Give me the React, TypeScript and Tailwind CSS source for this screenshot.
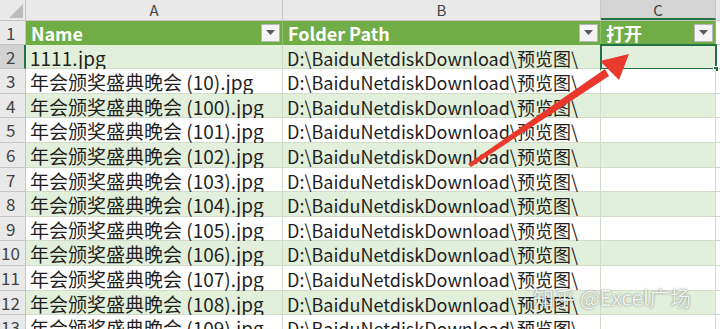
import React from "react";

const FONT = { fontFamily: '"Noto Sans CJK SC", "Noto Sans", sans-serif' };

const names = [
  "1111.jpg",
  "年会颁奖盛典晚会 (10).jpg",
  "年会颁奖盛典晚会 (100).jpg",
  "年会颁奖盛典晚会 (101).jpg",
  "年会颁奖盛典晚会 (102).jpg",
  "年会颁奖盛典晚会 (103).jpg",
  "年会颁奖盛典晚会 (104).jpg",
  "年会颁奖盛典晚会 (105).jpg",
  "年会颁奖盛典晚会 (106).jpg",
  "年会颁奖盛典晚会 (107).jpg",
  "年会颁奖盛典晚会 (108).jpg",
  "年会颁奖盛典晚会 (109).jpg",
];

const PATH = "D:\\BaiduNetdiskDownload\\预览图\\";

function Dropdown() {
  return (
    <div className="mr-[2px] flex h-[18px] w-[19px] shrink-0 items-center justify-center border border-[#b8b8b8] bg-[#f4f4f4]">
      <svg width="9" height="5" viewBox="0 0 9 5">
        <path d="M0 0h9L4.5 5z" fill="#5a5a5a" />
      </svg>
    </div>
  );
}

function HeaderCell({ label, className }: { label: string; className: string }) {
  return (
    <div className={`flex items-center justify-between border-r border-[#8fc06c] pl-[5px] ${className}`}>
      <span className="pt-[1px] text-[18px] font-bold text-white">{label}</span>
      <Dropdown />
    </div>
  );
}

export default function App() {
  return (
    <div className="relative h-[329px] w-[720px] overflow-hidden bg-white text-[#1f1f1f]" style={FONT}>
      {/* column letters */}
      <div className="flex h-[20.5px] border-b border-[#c6c6c6] bg-[#e9e9e9] text-[15px] leading-[19px] text-[#444]">
        <div className="relative w-[26px] border-r border-[#c6c6c6]">
          <svg className="absolute bottom-[2px] right-[2px]" width="14" height="14" viewBox="0 0 14 14">
            <path d="M14 0v14H0z" fill="#bdbdbd" />
          </svg>
        </div>
        <div className="w-[257px] border-r border-[#c6c6c6] text-center">A</div>
        <div className="w-[318px] border-r border-[#c6c6c6] text-center">B</div>
        <div className="w-[115px] border-r border-[#c6c6c6] border-b-2 border-b-[#217346] bg-[#d5d5d5] text-center">C</div>
        <div className="flex-1" />
      </div>

      {/* table header */}
      <div className="flex h-[24.1px]">
        <div className="w-[26px] border-r border-b border-[#c6c6c6] bg-[#e9e9e9] pl-[6px] text-[17px] leading-[24px] text-[#444]">1</div>
        <HeaderCell label="Name" className="w-[257px] bg-[#70ad47]" />
        <HeaderCell label="Folder Path" className="w-[318px] bg-[#70ad47]" />
        <HeaderCell label="打开" className="w-[115px] bg-[#70ad47]" />
        <div className="flex-1 border-b border-[#d4d4d4]" />
      </div>

      {/* body rows */}
      {names.map((n, i) => {
        const row = i + 2;
        const green = i % 2 === 0;
        const bg = green ? "bg-[#e2efda]" : "bg-white";
        const sel = row === 2;
        return (
          <div key={row} className="flex h-[24.6px] leading-[24px]">
            <div
              className={`w-[26px] border-b border-[#c6c6c6] text-[17px] text-[#444] ${
                sel ? "border-r-2 border-r-[#217346] bg-[#d2d2d2] pl-[6px]" : "border-r bg-[#e9e9e9] " + (row < 10 ? "pl-[6px]" : "pl-[1px]")
              }`}
            >
              {row}
            </div>
            <div className={`w-[257px] whitespace-nowrap border-r border-b border-[#d2dccb] pl-[4px] pt-[1px] text-[19px] ${bg}`}>{n}</div>
            <div className={`w-[318px] whitespace-nowrap border-r border-b border-[#d2dccb] pl-[4px] pt-[1px] text-[18px] ${bg}`}>{PATH}</div>
            <div className={`relative w-[115px] border-r border-b border-[#d2dccb] ${bg}`}>
              {sel && (
                <div className="absolute -left-[1px] -top-[1px] h-[26px] w-[117px] border-2 border-[#217346]">
                  <div className="absolute -bottom-[4px] -right-[4px] h-[6px] w-[6px] border border-white bg-[#217346]" />
                </div>
              )}
            </div>
            <div className="flex-1 border-b border-[#d4d4d4]" />
          </div>
        );
      })}

      {/* red arrow */}
      <svg className="pointer-events-none absolute left-0 top-0" width="720" height="329" viewBox="0 0 720 329">
        <path d="M468 164 L605 69 L609 76 L471 167 Z" fill="#e8392c" />
        <path d="M629 54 L600 61 L619 80 Z" fill="#e8392c" />
      </svg>

      {/* watermark */}
      <div
        className="pointer-events-none absolute left-[533px] top-[282px] whitespace-nowrap text-[21px] text-white/90"
        style={{ textShadow: "0 0 1px rgba(0,0,0,0.45), 0 0 3px rgba(0,0,0,0.25)" }}
      >
        知乎 @Excel广场
      </div>
    </div>
  );
}
